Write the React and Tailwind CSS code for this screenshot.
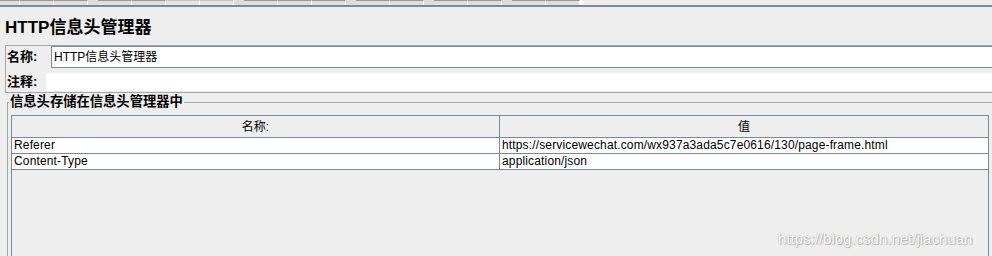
const FONT = "font-['Liberation_Sans','Noto_Sans_CJK_SC',sans-serif]";

// button bottoms of the toolbar that scrolled out of view
const TOOLBAR = [
  [20, 'btn'], [34, 'btn'], [34, 'btn'], [10, 'gap'],
  [34, 'btn'], [34, 'btn'], [34, 'off'], [34, 'off'], [10, 'gap'],
  [34, 'btn'], [34, 'btn'], [34, 'btn'], [10, 'gap'],
  [34, 'btn'], [34, 'btn'], [10, 'gap'],
  [34, 'btn'], [34, 'btn'], [10, 'gap'],
  [34, 'btn'], [34, 'btn'], [3, 'end'],
];

const HEADERS = [
  { name: 'Referer', value: 'https://servicewechat.com/wx937a3ada5c7e0616/130/page-frame.html' },
  { name: 'Content-Type', value: 'application/json' },
];

function Toolbar() {
  return (
    <div className="flex h-[5px] bg-[#eeeeee]">
      {TOOLBAR.map(([w, kind], i) => (
        <div
          key={i}
          style={{ width: w }}
          className={
            kind === 'btn'
              ? 'h-full border-t border-[#9a9a9a] border-r border-r-white bg-[#dedede]'
              : kind === 'off'
              ? 'h-full border-t border-[#c4c4c4] border-r border-r-white bg-[#e4e4e4]'
              : kind === 'gap'
              ? 'h-full bg-[#dcdcdc]'
              : 'h-full bg-white'
          }
        />
      ))}
    </div>
  );
}

export default function App() {
  return (
    <div className={`${FONT} relative w-[992px] h-[256px] overflow-hidden bg-[#eeeeee] text-black`}>
      <Toolbar />
      <div className="h-[2px] bg-[#7a8a99]" />

      <div className="pt-[11px] pb-[7px] pl-[5px]">
        <div className="h-[20px] leading-[20px] text-[17px] font-bold whitespace-nowrap">HTTP信息头管理器</div>
      </div>

      {/* name / comment */}
      <div className="ml-[5px] w-[1000px] border border-[#a6a6a6]">
        <div className="flex h-[22px]">
          <div className="w-[45px] pl-[1px] flex items-center text-[13px] font-bold">名称:</div>
          <div className="flex-1 flex items-center pl-[2px] bg-white border border-[#7a8a99] text-[12px]">
            HTTP信息头管理器
          </div>
        </div>
        <div className="flex h-[18px] mt-[5px] mb-[1px]">
          <div className="w-[40px] pl-[1px] flex items-center text-[13px] font-bold">注释:</div>
          <div className="flex-1 bg-white" />
        </div>
      </div>

      {/* header list */}
      <fieldset className="mt-[1px] ml-[7px] w-[1000px] h-[200px] border border-[#a6a6a6] pl-[3px]">
        <legend className="-ml-[2px] px-[1px] text-[13.3px] leading-[16px] font-bold">信息头存储在信息头管理器中</legend>
        <div className="mt-[5px] w-[978px] h-[200px] border border-[#7a8a99] bg-[#eeeeee]">
          <div className="flex h-[22px] border-b border-[#7a8a99] text-[12px]">
            <div className="w-[488px] border-r border-[#7a8a99] flex items-center justify-center">名称:</div>
            <div className="flex-1 flex items-center justify-center">值</div>
          </div>
          {HEADERS.map((h) => (
            <div key={h.name} className="flex h-[16px] border-b border-[#7a8a99] bg-white text-[12px] leading-[15px] tracking-[0.15px]">
              <div className="w-[488px] border-r border-[#7a8a99] pl-[2px] whitespace-nowrap">{h.name}</div>
              <div className="flex-1 pl-[2px] whitespace-nowrap">{h.value}</div>
            </div>
          ))}
        </div>
      </fieldset>

      <div className="absolute left-[778px] top-[228px] text-[15px] text-white [text-shadow:0_0_1px_#8f8f8f,1px_1px_1px_#b8b8b8] whitespace-nowrap font-['Liberation_Sans',sans-serif]">
        https://blog.csdn.net/jiachuan
      </div>
    </div>
  );
}
